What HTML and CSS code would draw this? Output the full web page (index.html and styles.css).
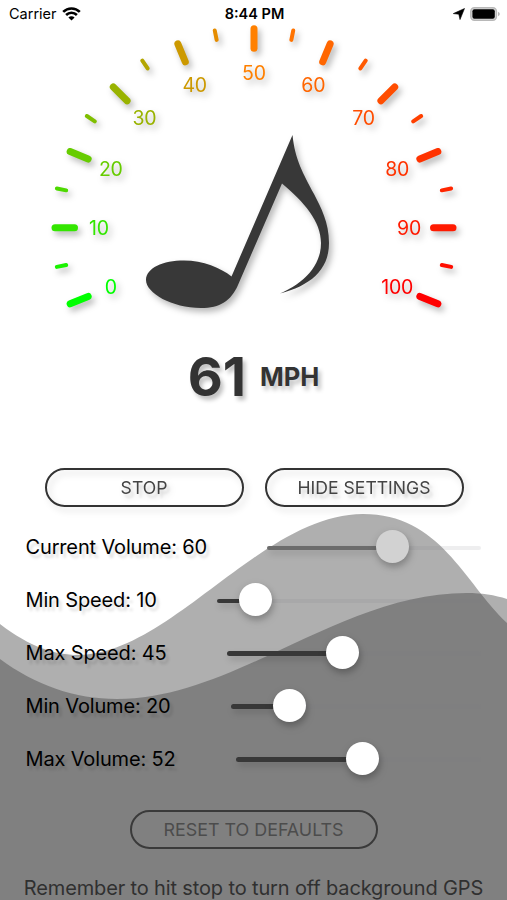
FILE: index.html
```
<!DOCTYPE html>
<html lang="en">
<head>
  <meta charset="UTF-8">
  <meta name="viewport" content="width=device-width, initial-scale=1.0">
  <title>Speed Volume</title>
  <link rel="stylesheet" href="styles.css">
</head>
<body>
  <svg class="waves" viewBox="0 0 507 900">
    <path d="M0 624C30 647 55 655 78 655C170 655 262 514 363 514C440 514 464 582 507 623V900H0Z"/>
    <path d="M0 659C35 685 75 699 117 699C235 699 340 593 467 593C481 593 495 595 507 599V900H0Z"/>
  </svg>

  <header class="status-bar">
    <div class="carrier">
      <span>Carrier</span>
      <svg width="19" height="14" viewBox="0 0 19 14">
        <path d="M1.2 4.9A11.8 11.8 0 0 1 17.8 4.9M4.1 8A7.7 7.7 0 0 1 14.9 8" fill="none" stroke="#000" stroke-width="2.6"/>
        <path d="M9.5 13.6L6.4 10.5A4.4 4.4 0 0 1 12.6 10.5Z"/>
      </svg>
    </div>
    <div class="time">8:44 PM</div>
    <div class="battery">
      <svg width="12" height="12" viewBox="0 0 12 12"><path d="M11.5 .5L7 11.6L5.8 6.2L.3 5.6Z" stroke="#000" stroke-width=".6"/></svg>
      <svg width="30" height="14" viewBox="0 0 30 14">
        <rect x=".8" y=".8" width="25.6" height="12.4" rx="3.6" fill="#ddd" stroke="#b8b8b8" stroke-width="1.5"/>
        <rect x="2.4" y="2.2" width="22.4" height="9.6" rx="2"/>
        <path d="M28 4.8Q29.8 5.6 29.8 7T28 9.2Z" fill="#b5b5b5"/>
      </svg>
    </div>
  </header>

  <main>
    <svg class="gauge" viewBox="0 24 507 310">
      <g id="ticks"></g>
      <path class="note" d="M292.5 135C295 160 303 173 314 194C321 208 329 222 329 243C329 271 309 286 280 293.5C304 283 321 266 321 243C321 221 304 202 282 183.5L238 285C231 301 220 308 201 308C172 308 146 293 146 280C146 268 163 260.5 184 260.5C203 260.5 221 268 231.5 276.5Z"/>
    </svg>

    <div class="speed">
      <span class="value">61</span>
      <span class="unit">MPH</span>
    </div>

    <div class="buttons">
      <button>STOP</button>
      <button>HIDE SETTINGS</button>
    </div>

    <div class="settings">
      <div class="row disabled">
        <label>Current Volume: 60</label>
        <div class="slider"><div class="fill" style="width:58.7%"></div></div>
      </div>
      <div class="row">
        <label>Min Speed: 10</label>
        <div class="slider"><div class="fill" style="width:14.6%"></div></div>
      </div>
      <div class="row">
        <label>Max Speed: 45</label>
        <div class="slider"><div class="fill" style="width:45.7%"></div></div>
      </div>
      <div class="row">
        <label>Min Volume: 20</label>
        <div class="slider"><div class="fill" style="width:23.5%"></div></div>
      </div>
      <div class="row">
        <label>Max Volume: 52</label>
        <div class="slider"><div class="fill" style="width:51.6%"></div></div>
      </div>
    </div>

    <button class="reset">RESET TO DEFAULTS</button>
    <p class="reminder">Remember to hit stop to turn off background GPS</p>
  </main>

  <script>
    const CX = 254;
    const CY = 227.7;
    const ticks = document.getElementById('ticks');

    // green up to 50, then orange to red
    function tickColor(speed) {
      const red = Math.min(255, speed * 5.1);
      const green = 255 - speed * 2.55;
      return `rgb(${Math.round(red)}, ${Math.round(green)}, 0)`;
    }

    function add(name, attrs, text) {
      const el = document.createElementNS('http://www.w3.org/2000/svg', name);
      for (const key in attrs) el.setAttribute(key, attrs[key]);
      if (text !== undefined) el.textContent = text;
      ticks.appendChild(el);
    }

    for (let speed = 0; speed <= 100; speed += 5) {
      const major = speed % 10 === 0;
      const angle = (202.5 - speed * 2.25) * Math.PI / 180;
      const cos = Math.cos(angle);
      const sin = Math.sin(angle);
      const outer = major ? 199 : 201;
      const inner = major ? 179.5 : 191.5;
      add('line', {
        class: major ? 'major' : 'minor',
        stroke: tickColor(speed),
        x1: CX + outer * cos, y1: CY - outer * sin,
        x2: CX + inner * cos, y2: CY - inner * sin
      });
      if (major) {
        add('text', {
          fill: tickColor(speed),
          x: CX + 155 * cos, y: CY - 155 * sin + 7.2
        }, speed);
      }
    }
  </script>
</body>
</html>
```
FILE: styles.css
```
* {
  box-sizing: border-box;
}
body {
  margin: 0;
  width: 507px;
  height: 900px;
  overflow: hidden;
  position: relative;
  background: #fff;
  color: #000;
  font-family: Inter, "Liberation Sans", sans-serif;
}
svg {
  display: block;
}
.waves {
  position: absolute;
  top: 0;
  left: 0;
  width: 507px;
  height: 900px;
  z-index: -1;
  fill: rgba(60, 60, 60, 0.41);
}
.status-bar {
  display: grid;
  grid-template-columns: 1fr auto 1fr;
  align-items: center;
  height: 24px;
  padding: 3px 7px 0 9px;
  font-size: 14.5px;
}
.carrier {
  display: flex;
  align-items: center;
  gap: 5px;
}
.time {
  font-weight: 600;
}
.battery {
  display: flex;
  align-items: center;
  justify-content: flex-end;
  gap: 5px;
}
main {
  display: flex;
  flex-direction: column;
}
.gauge {
  width: 507px;
  height: 310px;
}
.gauge line {
  stroke-linecap: round;
}
.gauge .major {
  stroke-width: 7;
}
.gauge .minor {
  stroke-width: 4;
}
.gauge text {
  font-size: 19.5px;
  letter-spacing: -0.2px;
  text-anchor: middle;
}
.gauge line,
.gauge text,
.note {
  filter: drop-shadow(3px 4px 3px rgba(0, 0, 0, 0.28));
}
.note {
  fill: #383838;
}
.speed {
  display: flex;
  justify-content: center;
  align-items: center;
  gap: 14px;
  height: 84px;
  color: #333;
  font-weight: 700;
  text-shadow: 3px 4px 4px rgba(0, 0, 0, 0.25);
}
.speed .value {
  font-size: 54px;
}
.speed .unit {
  font-size: 25.5px;
}
button {
  height: 39px;
  padding: 0;
  background: none;
  border: 2.5px solid #333;
  border-radius: 20px;
  color: #444;
  font-family: inherit;
  font-size: 17.6px;
  text-shadow: 3px 4px 3px rgba(0, 0, 0, 0.1);
  filter: drop-shadow(3px 4px 3px rgba(0, 0, 0, 0.15));
}
.buttons {
  display: flex;
  justify-content: center;
  gap: 21px;
  margin-top: 50px;
  padding-left: 1px;
}
.buttons button {
  width: 199px;
}
.settings {
  margin-top: 14px;
  padding: 0 26px 0 25.5px;
}
.row {
  display: flex;
  align-items: center;
  gap: 60px;
  height: 52.8px;
}
.row label {
  font-size: 20px;
  letter-spacing: -0.15px;
  white-space: nowrap;
  text-shadow: 3px 4px 3px rgba(0, 0, 0, 0.15);
}
.slider {
  flex: 1;
  height: 4.5px;
  margin-top: 1.5px;
  border-radius: 3px;
  background: rgba(120, 120, 128, 0.13);
}
.fill {
  position: relative;
  height: 100%;
  border-radius: 3px;
  background: #383838;
  filter: drop-shadow(2px 4px 3px rgba(0, 0, 0, 0.15));
}
.fill::after {
  content: "";
  position: absolute;
  right: -16.5px;
  top: -15.5px;
  width: 33px;
  height: 33px;
  border-radius: 50%;
  background: #fff;
  box-shadow: 0 3px 8px rgba(0, 0, 0, 0.15);
}
.disabled .fill {
  background: #6c6c6c;
}
.disabled .fill::after {
  background: #d2d2d2;
}
.reset {
  align-self: center;
  width: 248px;
  margin-top: 25px;
  border-color: #3a3a3a;
  color: #4c4c4c;
  font-size: 17.9px;
  text-shadow: none;
  filter: none;
}
.reminder {
  margin: 27px 0 0;
  text-align: center;
  font-size: 20px;
  letter-spacing: -0.14px;
  white-space: nowrap;
  color: #303030;
}
```
